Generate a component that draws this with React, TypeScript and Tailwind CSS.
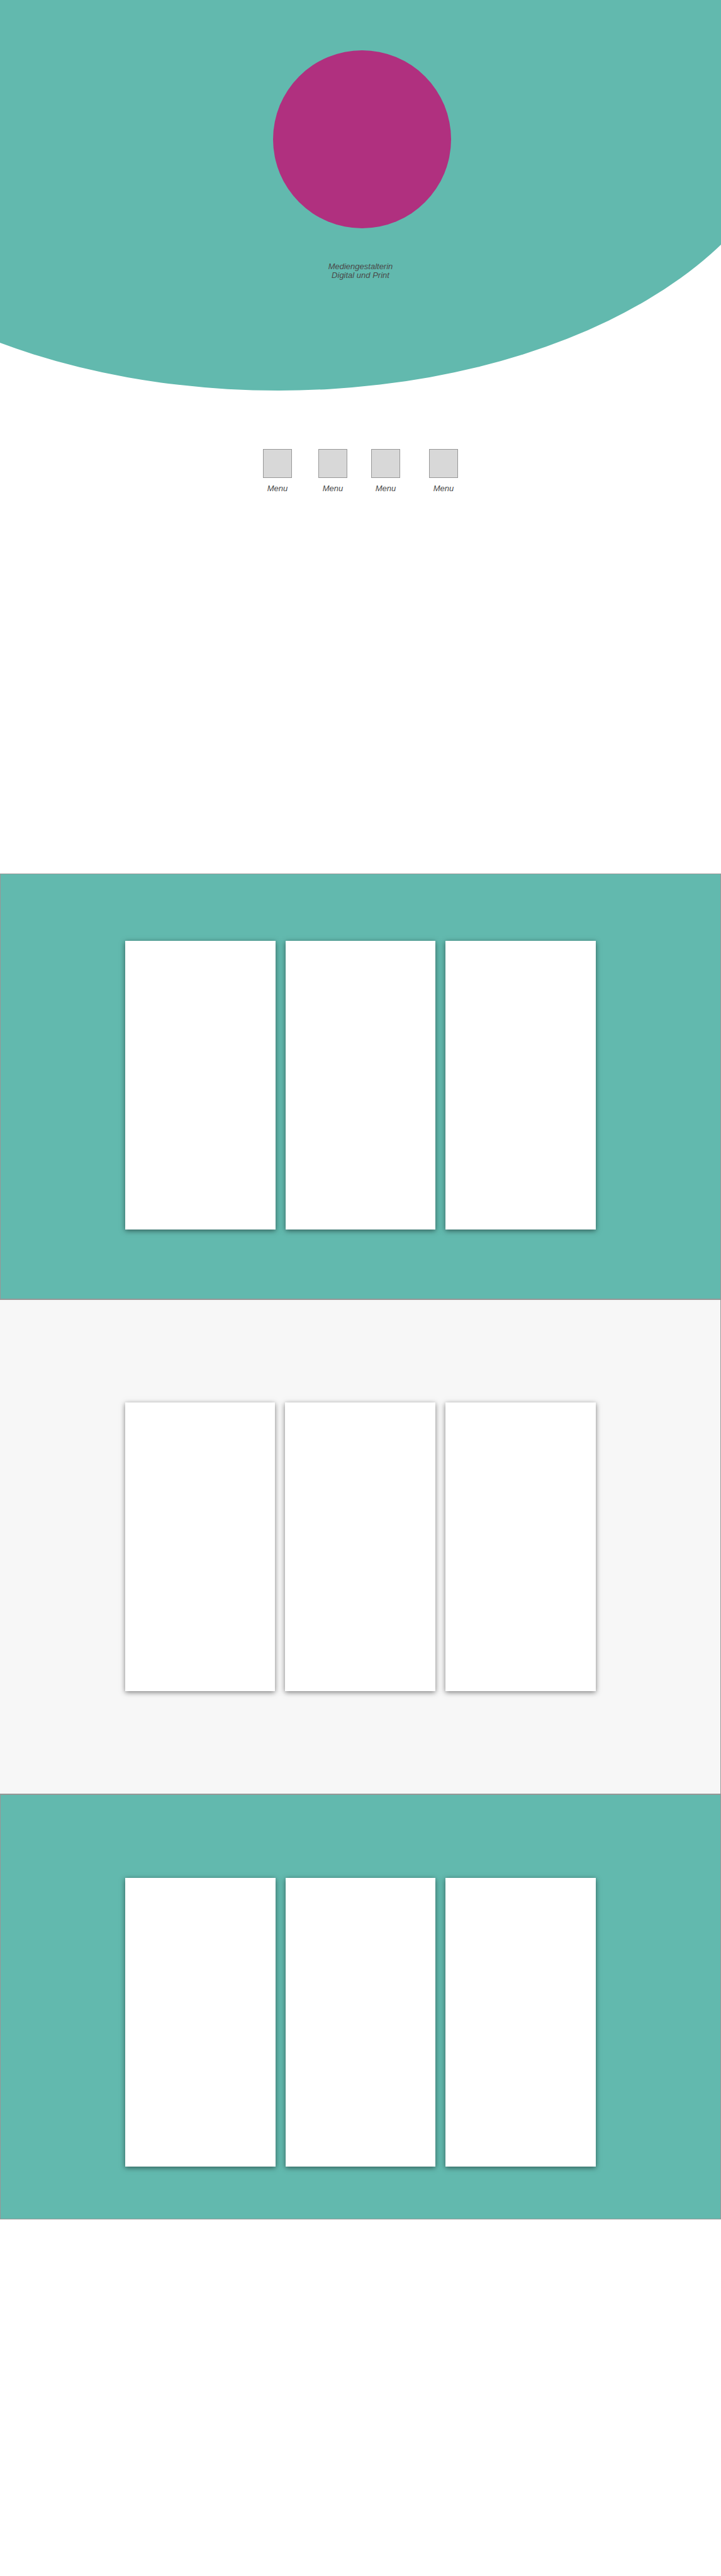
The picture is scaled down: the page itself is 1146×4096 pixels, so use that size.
type PanelProps = { label: string; className: string };

const menuItems = [
  { href: "#projekte", className: "mr-[42px]" },
  { href: "#arbeiten", className: "mr-[38px]" },
  { href: "#galerie", className: "mr-[46px]" },
  { href: "#kontakt", className: "" },
];

function Hero() {
  return (
    <header className="relative flex h-[621px] flex-col items-center">
      <svg
        className="absolute inset-0 h-full w-full"
        viewBox="0 0 1440 781"
        preserveAspectRatio="none"
        aria-hidden="true"
      >
        <ellipse cx="556" cy="166" rx="1039" ry="615" fill="#62b9ae" />
      </svg>
      <div className="relative pt-20 pl-1">
        <div className="size-[283px] rounded-full bg-[#b0307f]" />
      </div>
      <p className="relative mt-[54px] text-center leading-[14px]">
        Mediengestalterin
        <br />
        Digital und Print
      </p>
    </header>
  );
}

function Menu() {
  return (
    <nav className="flex justify-center pt-[93px]">
      {menuItems.map((item) => (
        <a
          key={item.href}
          href={item.href}
          className={`flex w-[46px] flex-col items-center gap-[10px] leading-[14px] ${item.className}`}
        >
          <span className="size-[46px] border border-[#979797] bg-[#d8d8d8]" />
          Menu
        </a>
      ))}
    </nav>
  );
}

function Panel({ label, className }: PanelProps) {
  return (
    <section aria-label={label} className={`border-[#979797] px-6 ${className}`}>
      <div className="mx-auto grid max-w-[748px] grid-cols-3 gap-4">
        {[0, 1, 2].map((card) => (
          <article
            key={card}
            className="h-[459px] bg-white shadow-[0_2px_8px_rgba(0,0,0,0.5)]"
          />
        ))}
      </div>
    </section>
  );
}

export default function App() {
  return (
    <div className="bg-white pb-[567px] font-['Liberation_Sans',Arial,sans-serif] text-[13px] text-[#4a4a4a] italic">
      <Hero />
      <Menu />
      <main className="pt-[605px]">
        <Panel label="Projekte" className="border bg-[#62b9ae] pt-[106px] pb-[110px]" />
        <Panel label="Arbeiten" className="border-y border-r bg-[#f7f7f7] pt-[163px] pb-[163px]" />
        <Panel label="Galerie" className="border bg-[#62b9ae] pt-[132px] pb-[83px]" />
      </main>
    </div>
  );
}
